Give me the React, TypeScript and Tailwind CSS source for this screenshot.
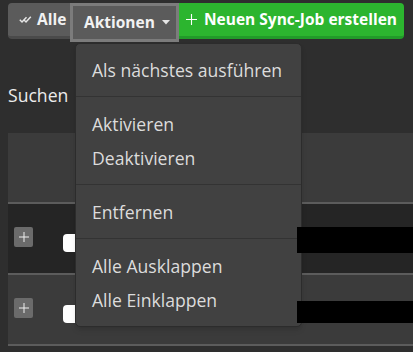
import { ReactNode } from 'react'

function DoubleCheck() {
  return (
    <svg width="13" height="9" viewBox="0 0 13 9" fill="none" stroke="#e6e6e6" strokeWidth="1.5">
      <path d="M0.8 4.8 L3 7 L7.5 2.2" />
      <path d="M4.8 4.8 L7 7 L11.8 1.8" />
    </svg>
  )
}

function Caret() {
  return (
    <svg width="8" height="5" viewBox="0 0 8 5">
      <path d="M0 0 H8 L4 4.5 Z" fill="#e6e6e6" />
    </svg>
  )
}

function ThinPlus({ size = 12, color = '#ffffff' }: { size?: number; color?: string }) {
  return (
    <svg width={size} height={size} viewBox="0 0 12 12" stroke={color} strokeWidth="1.2">
      <path d="M6 0 V12 M0 6 H12" />
    </svg>
  )
}

function MenuItem({ children }: { children: ReactNode }) {
  return <div className="h-[34px] pl-[16px] text-[17.6px] leading-[34px] whitespace-nowrap text-[#dcdcdc]">{children}</div>
}

function Divider() {
  return <div className="mb-[10px] mt-[9px] h-px bg-[#333333]" />
}

function Row({ dark }: { dark: boolean }) {
  return (
    <div
      className={`flex h-[71px] items-start border-b-2 border-[#5c5c5c] ${dark ? 'bg-[#252525]' : 'bg-[#3b3b3b]'}`}
    >
      <div className="ml-[6px] mt-[23px] flex h-[20px] w-[19px] items-center justify-center rounded-[2px] bg-[#6b6b6b]">
        <ThinPlus size={10} color="#f0f0f0" />
      </div>
      <div className="ml-[30px] mt-[30px] h-[18px] w-[18px] rounded-[4px] bg-white" />
    </div>
  )
}

export default function App() {
  return (
    <div className="relative h-[352px] w-[413px] overflow-hidden bg-[#2e2e2e] font-['Open_Sans',sans-serif]">
      <div className="flex items-start pl-2 pt-[3px]">
        <button className="flex h-[36px] w-[62px] items-center gap-[5px] rounded-l-[4px] border-b-[3px] border-[#4a4a4a] bg-[#5b5b5b] pl-[11px] text-[15.5px] font-bold whitespace-nowrap text-[#f2f2f2]">
          <DoubleCheck />
          Alle
        </button>
        <button className="flex h-[39px] w-[109px] items-center gap-[7px] border-[3px] border-[#7c7c7c] bg-[#5b5b5b] pl-[11px] text-[15.5px] font-bold whitespace-nowrap text-[#f2f2f2]">
          Aktionen
          <Caret />
        </button>
        <button className="flex h-[36px] w-[225px] items-center gap-[7px] rounded-r-[4px] border-b-[3px] border-[#229a29] bg-[#2cb52f] pl-[7px] text-[15.5px] font-bold whitespace-nowrap text-white">
          <ThinPlus size={11} />
          Neuen Sync-Job erstellen
        </button>
      </div>

      <div className="mt-[41px] pl-2 text-[17.6px] leading-[24px] text-[#ececec]">Suchen</div>

      <div className="ml-2 mt-[26px]">
        <div className="h-[71px] border-b-2 border-[#5c5c5c] bg-[#3b3b3b]" />
        <Row dark />
        <Row dark={false} />
      </div>

      <div className="absolute left-[75px] top-[43px] w-[227px] rounded-[5px] border border-[#2c2c2c] bg-[#414141] py-[9px] shadow-md">
        <MenuItem>Als nächstes ausführen</MenuItem>
        <Divider />
        <MenuItem>Aktivieren</MenuItem>
        <MenuItem>Deaktivieren</MenuItem>
        <Divider />
        <MenuItem>Entfernen</MenuItem>
        <Divider />
        <MenuItem>Alle Ausklappen</MenuItem>
        <MenuItem>Alle Einklappen</MenuItem>
      </div>

      <div className="pointer-events-none absolute left-[297px] top-[227px] h-[26px] w-[116px] bg-black" />
      <div className="pointer-events-none absolute left-[297px] top-[301px] h-[22px] w-[116px] bg-black" />
    </div>
  )
}
